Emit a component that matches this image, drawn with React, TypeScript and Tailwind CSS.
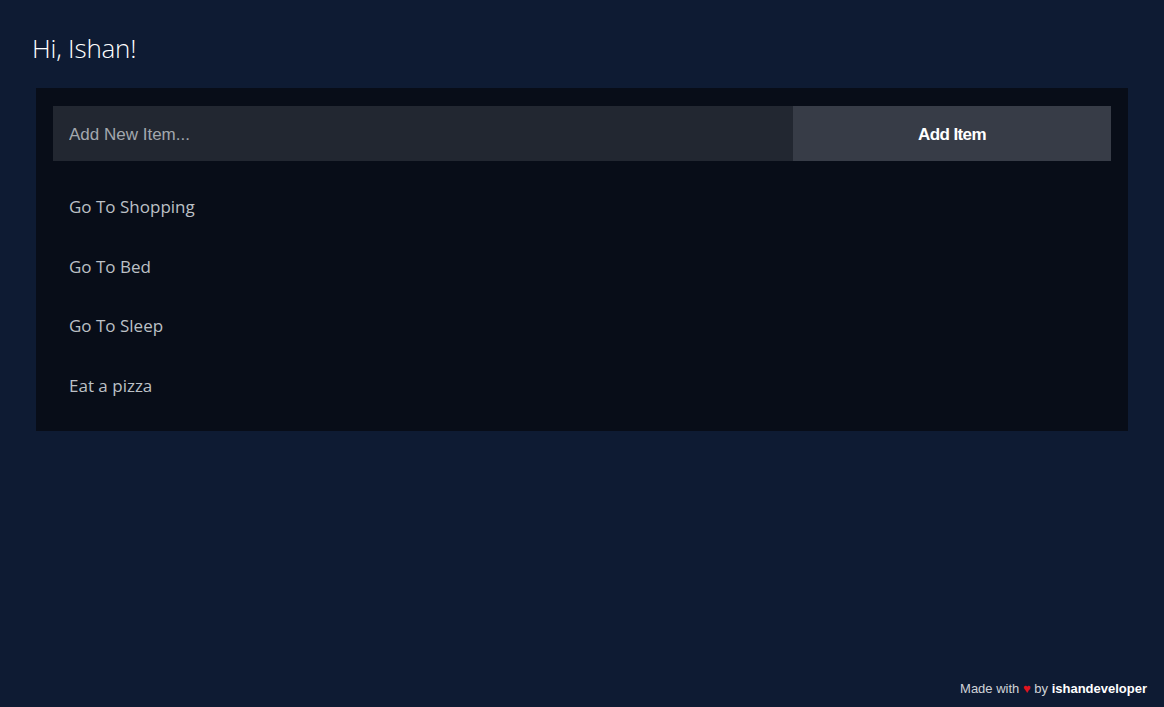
import { useState } from 'react';

export default function App() {
  const [items] = useState(['Go To Shopping', 'Go To Bed', 'Go To Sleep', 'Eat a pizza']);

  return (
    <div className="min-h-[707px] bg-[#0e1b33] relative" style={{ fontFamily: '"Open Sans", sans-serif' }}>
      <div className="px-[36px] pt-[30px]">
        <h1 className="text-[26px] leading-[36px] font-light text-white -ml-[4px] tracking-[-0.2px]">Hi, Ishan!</h1>

        <div className="mt-[22px] bg-[#080d18] px-[17px] pt-[18px] pb-[17px]">
          <div className="flex h-[55px]">
            <input
              className="flex-1 bg-[#222731] px-4 pt-[2px] text-[17px] text-white placeholder-[#a3a7ae] outline-none"
              style={{ fontFamily: '"Liberation Sans", Arial, sans-serif' }}
              placeholder="Add New Item..."
            />
            <button
              className="w-[318px] bg-[#373c47] pt-[2px] text-white text-[17px] font-bold tracking-[-0.6px]"
              style={{ fontFamily: '"Liberation Sans", Arial, sans-serif' }}
            >
              Add Item
            </button>
          </div>

          <ul className="mt-[15px]">
            {items.map((item) => (
              <li key={item} className="h-[59.5px] flex items-center px-4 pt-[2px] text-[17px] font-normal text-[#bcc0c6]">
                {item}
              </li>
            ))}
          </ul>
        </div>
      </div>

      <div
        className="absolute right-[17px] bottom-[9px] text-[13px] text-[#d0d3d8]"
        style={{ fontFamily: '"Liberation Sans", Arial, sans-serif' }}
      >
        Made with <span className="text-[#e0141e]">♥</span> by <span className="font-bold text-white">ishandeveloper</span>
      </div>
    </div>
  );
}
